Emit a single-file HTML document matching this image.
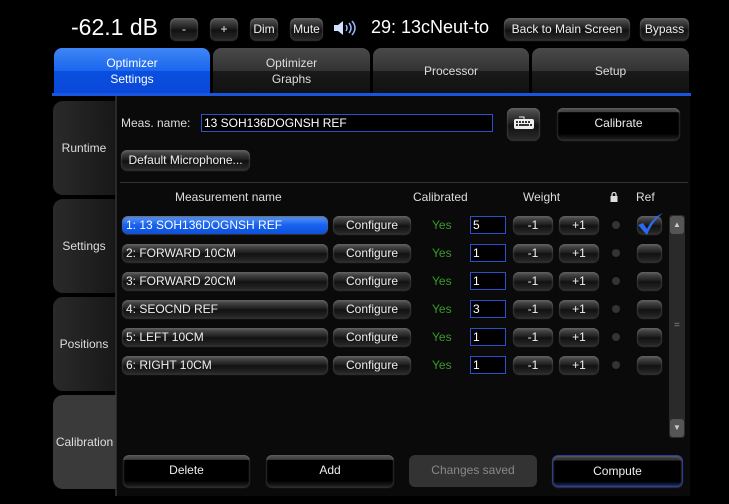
<!DOCTYPE html><html><head><style>
body{margin:0;width:729px;height:504px;background:#000;font-family:"Liberation Sans",sans-serif;color:#fff;position:relative;overflow:hidden}
.a{position:absolute}
.btn{position:absolute;border-radius:6px;background:linear-gradient(#555,#222 45%,#111 55%,#2a2a2a);box-shadow:0 1px 2px #666 inset,0 1px 1px #333;color:#eee;font-size:12px;text-align:center;box-sizing:border-box}
.tab{position:absolute;top:48px;height:46px;border-radius:8px 8px 0 0;background:linear-gradient(#4a4a4a,#333 50%,#1a1a1a 50%,#111);font-size:12px;color:#ddd;text-align:center;display:flex;align-items:center;justify-content:center;line-height:16px}
.side{position:absolute;left:53px;width:62px;height:94px;border-radius:10px 0 0 10px;background:linear-gradient(90deg,#2a2a2a,#181818);font-size:12px;color:#ddd;display:flex;align-items:center;justify-content:center}
.row .btn{height:18px;line-height:18px}
.inp{position:absolute;border:1px solid #2a4fd0;background:#000;font-size:12px;line-height:16px;padding-left:2px;box-sizing:border-box;height:18px}
.yes{position:absolute;color:#3a9a2a;font-size:12px}
.dot{position:absolute;width:8px;height:8px;border-radius:50%;background:#333}
</style></head><body>
<div class="a" style="left:71px;top:14px;font-size:23px">-62.1 dB</div>
<div class="btn" style="left:170px;top:18px;width:28px;height:22px;line-height:22px">-</div>
<div class="btn" style="left:210px;top:18px;width:28px;height:22px;line-height:22px">+</div>
<div class="btn" style="left:250px;top:18px;width:28px;height:22px;line-height:22px">Dim</div>
<div class="btn" style="left:290px;top:18px;width:33px;height:22px;line-height:22px">Mute</div>
<svg class="a" style="left:333px;top:19px" width="24" height="18" viewBox="0 0 24 18"><path d="M1 6h4l5-4v14l-5-4H1z" fill="#cfe0ff"/><path d="M13 6q2 3 0 6M16 4q4 5 0 10M19 2q6 7 0 14" stroke="#9ab8ff" stroke-width="1.5" fill="none"/></svg>
<div class="a" style="left:371px;top:17px;font-size:18px">29: 13cNeut-to</div>
<div class="btn" style="left:504px;top:18px;width:126px;height:22px;line-height:22px">Back to Main Screen</div>
<div class="btn" style="left:640px;top:18px;width:49px;height:22px;line-height:22px">Bypass</div>
<div class="tab" style="left:54px;width:156px;background:linear-gradient(#3f86f5,#1a66ee 50%,#0a4fe0 50%,#0a48d8);color:#fff">Optimizer<br>Settings</div>
<div class="tab" style="left:213px;width:157px">Optimizer<br>Graphs</div>
<div class="tab" style="left:373px;width:156px">Processor</div>
<div class="tab" style="left:532px;width:157px">Setup</div>
<div class="a" style="left:52px;top:93px;width:639px;height:3px;background:#1a55e0"></div>
<div class="a" style="left:115px;top:96px;width:575px;height:400px;background:#0a0a0a"></div>
<div class="a" style="left:115px;top:96px;width:2px;height:400px;background:#2a2a2a"></div>
<div class="side" style="top:101px">Runtime</div>
<div class="side" style="top:199px">Settings</div>
<div class="side" style="top:297px">Positions</div>
<div class="side" style="top:395px;background:#3a3a3a;width:63px">Calibration</div>
<div class="a" style="left:121px;top:116px;font-size:12px;color:#ddd">Meas. name:</div>
<div class="inp" style="left:201px;top:114px;width:292px">13 SOH136DOGNSH REF</div>
<div class="btn" style="left:507px;top:108px;width:33px;height:32px"><svg style="margin-top:8px" width="22" height="14" viewBox="0 0 22 14"><rect x="1" y="3" width="20" height="10" rx="2" fill="#eee"/><g fill="#333"><rect x="3" y="5" width="2" height="2"/><rect x="6" y="5" width="2" height="2"/><rect x="9" y="5" width="2" height="2"/><rect x="12" y="5" width="2" height="2"/><rect x="15" y="5" width="2" height="2"/><rect x="3" y="8" width="2" height="2"/><rect x="6" y="8" width="10" height="2"/><rect x="17" y="8" width="2" height="2"/></g><path d="M11 3V1h-5" stroke="#eee" fill="none"/></svg></div>
<div class="btn" style="left:557px;top:108px;width:123px;height:32px;line-height:30px;background:linear-gradient(#444 0,#444 12%,#000 14%,#000 80%,#222)">Calibrate</div>
<div class="btn" style="left:121px;top:150px;width:129px;height:20px;line-height:20px">Default Microphone...</div>
<div class="a" style="left:120px;top:182px;width:568px;height:1px;background:#333"></div>
<div class="a" style="left:175px;top:190px;font-size:12px;color:#ddd">Measurement name</div>
<div class="a" style="left:413px;top:190px;font-size:12px;color:#ddd">Calibrated</div>
<div class="a" style="left:523px;top:190px;font-size:12px;color:#ddd">Weight</div>
<svg class="a" style="left:610px;top:192px" width="8" height="10" viewBox="0 0 8 10"><path d="M2 4V2.5a2 2 0 0 1 4 0V4" stroke="#ddd" fill="none" stroke-width="1.3"/><rect x="0.5" y="4" width="7" height="6" fill="#ddd"/></svg>
<div class="a" style="left:636px;top:190px;font-size:12px;color:#ddd">Ref</div>
<div class="row">
<div class="btn" style="left:122px;top:216px;width:206px;text-align:left;padding-left:4px;background:linear-gradient(#5a9af8,#1a62ee 50%,#0a50dd);color:#fff">1: 13 SOH136DOGNSH REF</div>
<div class="btn" style="left:333px;top:216px;width:78px">Configure</div><div class="yes" style="left:432px;top:218px">Yes</div>
<div class="inp" style="left:470px;top:216px;width:36px">5</div>
<div class="btn" style="left:513px;top:216px;width:40px">-1</div><div class="btn" style="left:559px;top:216px;width:40px">+1</div>
<div class="dot" style="left:612px;top:221px"></div>
<div class="btn" style="left:637px;top:216px;width:25px"></div>
<svg class="a" style="left:636px;top:212px" width="28" height="24" viewBox="0 0 28 24"><path d="M2 13l5-2 4 6C15 9 20 4 27 1 20 7 15 13 11 23z" fill="#2a6af0"/></svg>

<div class="btn" style="left:122px;top:244px;width:206px;text-align:left;padding-left:4px">2: FORWARD 10CM</div>
<div class="btn" style="left:333px;top:244px;width:78px">Configure</div><div class="yes" style="left:432px;top:246px">Yes</div>
<div class="inp" style="left:470px;top:244px;width:36px">1</div>
<div class="btn" style="left:513px;top:244px;width:40px">-1</div><div class="btn" style="left:559px;top:244px;width:40px">+1</div>
<div class="dot" style="left:612px;top:249px"></div><div class="btn" style="left:637px;top:244px;width:25px"></div>

<div class="btn" style="left:122px;top:272px;width:206px;text-align:left;padding-left:4px">3: FORWARD 20CM</div>
<div class="btn" style="left:333px;top:272px;width:78px">Configure</div><div class="yes" style="left:432px;top:274px">Yes</div>
<div class="inp" style="left:470px;top:272px;width:36px">1</div>
<div class="btn" style="left:513px;top:272px;width:40px">-1</div><div class="btn" style="left:559px;top:272px;width:40px">+1</div>
<div class="dot" style="left:612px;top:277px"></div><div class="btn" style="left:637px;top:272px;width:25px"></div>

<div class="btn" style="left:122px;top:300px;width:206px;text-align:left;padding-left:4px">4: SEOCND REF</div>
<div class="btn" style="left:333px;top:300px;width:78px">Configure</div><div class="yes" style="left:432px;top:302px">Yes</div>
<div class="inp" style="left:470px;top:300px;width:36px">3</div>
<div class="btn" style="left:513px;top:300px;width:40px">-1</div><div class="btn" style="left:559px;top:300px;width:40px">+1</div>
<div class="dot" style="left:612px;top:305px"></div><div class="btn" style="left:637px;top:300px;width:25px"></div>

<div class="btn" style="left:122px;top:328px;width:206px;text-align:left;padding-left:4px">5: LEFT 10CM</div>
<div class="btn" style="left:333px;top:328px;width:78px">Configure</div><div class="yes" style="left:432px;top:330px">Yes</div>
<div class="inp" style="left:470px;top:328px;width:36px">1</div>
<div class="btn" style="left:513px;top:328px;width:40px">-1</div><div class="btn" style="left:559px;top:328px;width:40px">+1</div>
<div class="dot" style="left:612px;top:333px"></div><div class="btn" style="left:637px;top:328px;width:25px"></div>

<div class="btn" style="left:122px;top:356px;width:206px;text-align:left;padding-left:4px">6: RIGHT 10CM</div>
<div class="btn" style="left:333px;top:356px;width:78px">Configure</div><div class="yes" style="left:432px;top:358px">Yes</div>
<div class="inp" style="left:470px;top:356px;width:36px">1</div>
<div class="btn" style="left:513px;top:356px;width:40px">-1</div><div class="btn" style="left:559px;top:356px;width:40px">+1</div>
<div class="dot" style="left:612px;top:361px"></div><div class="btn" style="left:637px;top:356px;width:25px"></div>
</div>
<div class="a" style="left:669px;top:215px;width:16px;height:223px;background:#2a2a2a;border-radius:3px"></div>
<div class="a" style="left:670px;top:216px;width:14px;height:18px;background:#555;border-radius:3px;font-size:8px;text-align:center;line-height:18px;color:#ccc">▲</div>
<div class="a" style="left:670px;top:419px;width:14px;height:18px;background:#555;border-radius:3px;font-size:8px;text-align:center;line-height:18px;color:#ccc">▼</div>
<div class="a" style="left:674px;top:320px;font-size:10px;color:#888">=</div>
<div class="btn" style="left:123px;top:455px;width:127px;height:32px;line-height:30px;background:linear-gradient(#444 0,#444 14%,#000 16%,#000 80%,#222)">Delete</div>
<div class="btn" style="left:266px;top:455px;width:128px;height:32px;line-height:30px;background:linear-gradient(#444 0,#444 14%,#000 16%,#000 80%,#222)">Add</div>
<div class="btn" style="left:409px;top:455px;width:128px;height:32px;line-height:30px;background:#333;box-shadow:none;color:#888">Changes saved</div>
<div class="btn" style="left:552px;top:455px;width:131px;height:32px;line-height:30px;background:linear-gradient(#333 0,#333 14%,#000 16%,#000 85%,#1a2a66);border:1px solid #2a3f9a">Compute</div>
</body></html>
